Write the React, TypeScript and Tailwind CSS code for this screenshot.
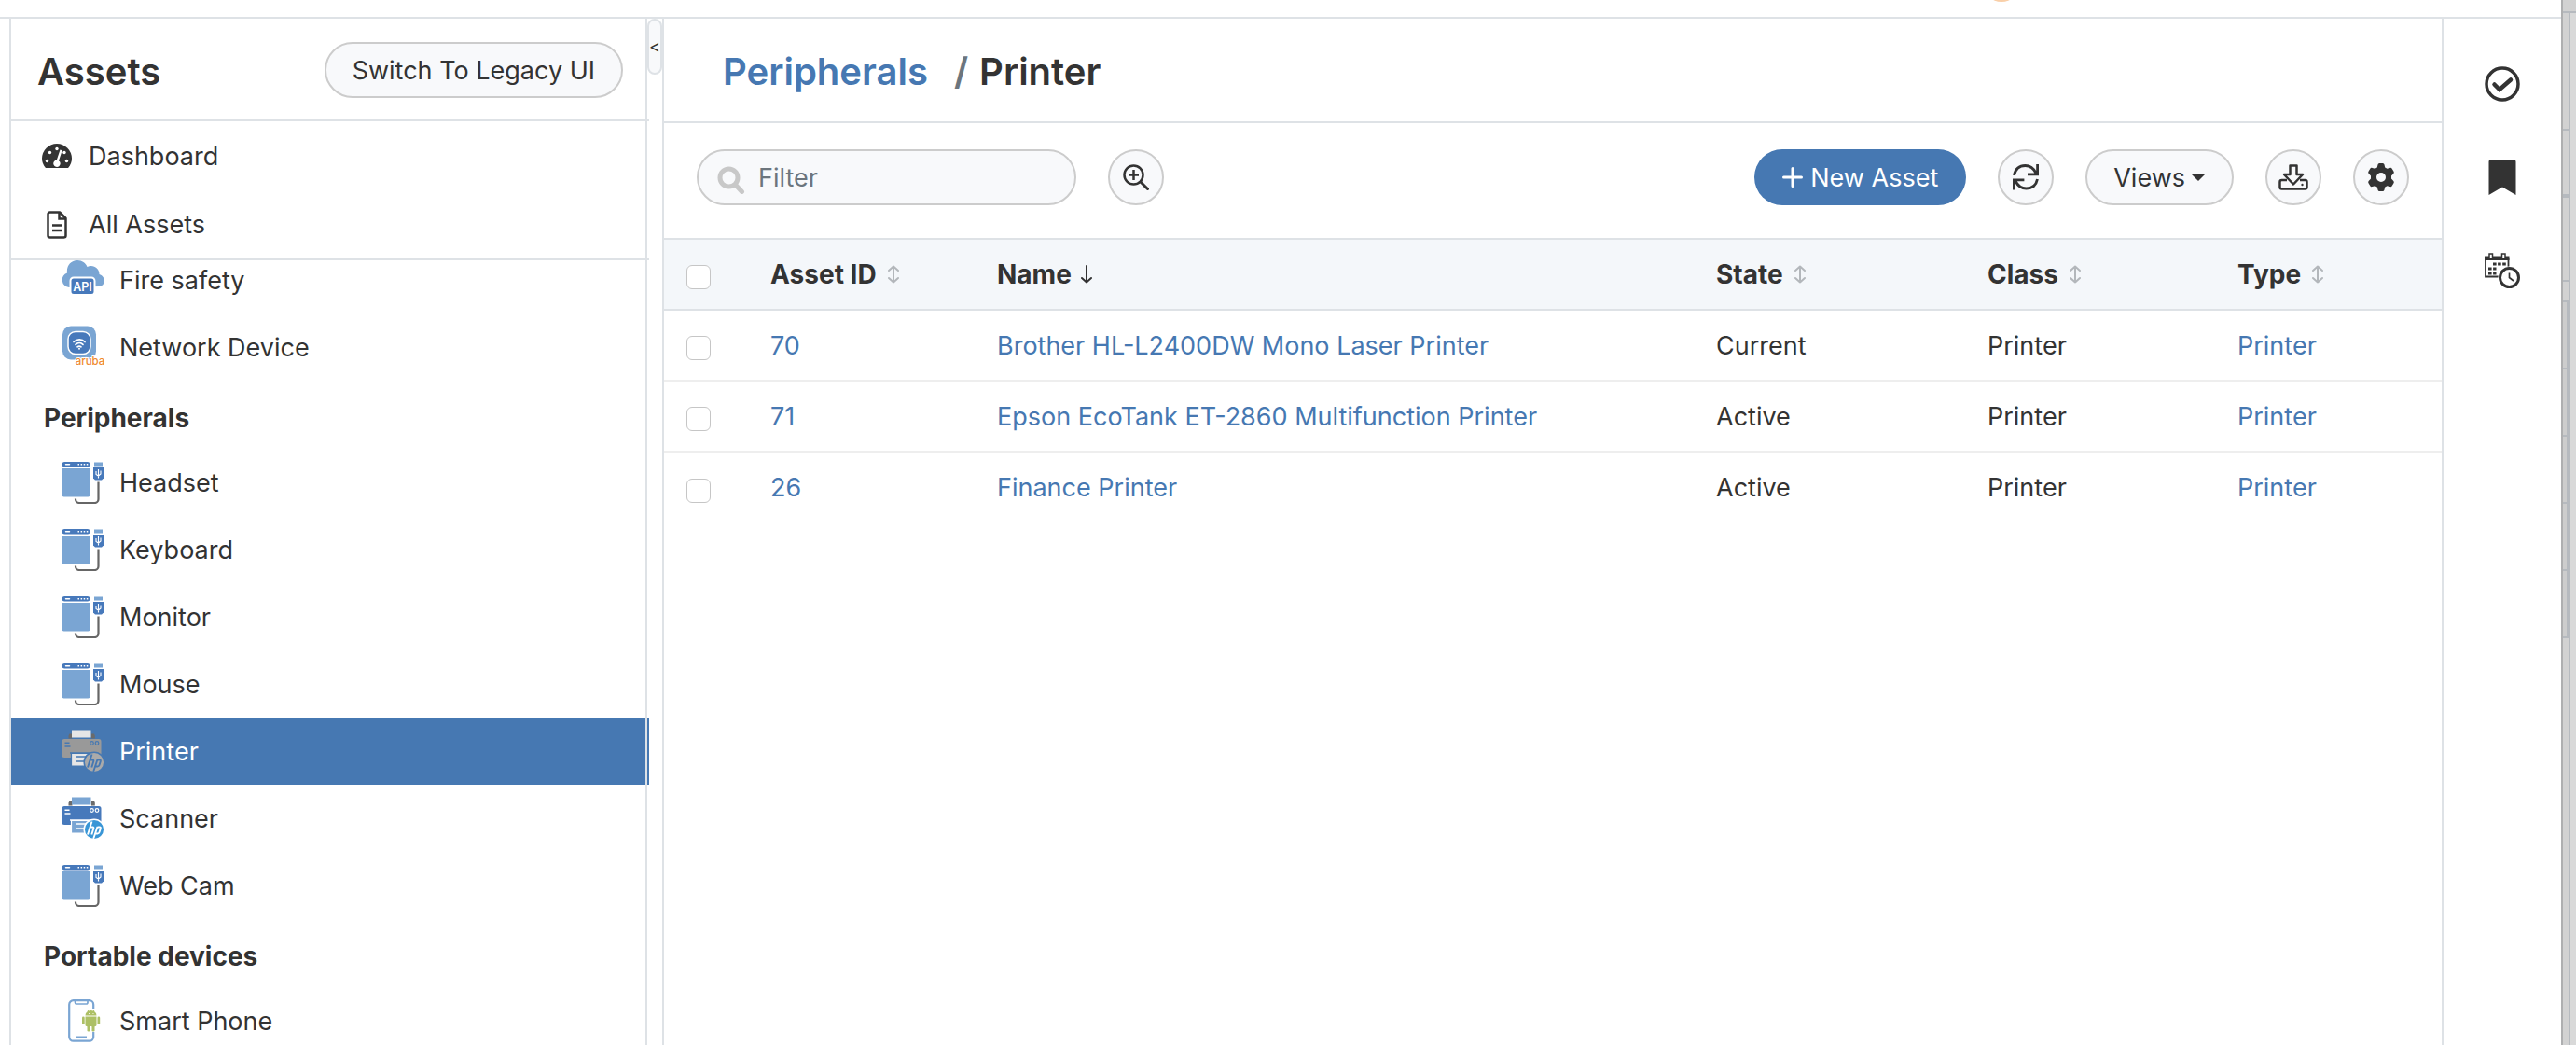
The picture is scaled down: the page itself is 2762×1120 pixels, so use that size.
import React from 'react';

const NODES = [
  { kind: 'item', label: 'Fire safety', icon: 'cloud' },
  { kind: 'item', label: 'Network Device', icon: 'wifi' },
  { kind: 'group', label: 'Peripherals' },
  { kind: 'item', label: 'Headset', icon: 'usb' },
  { kind: 'item', label: 'Keyboard', icon: 'usb' },
  { kind: 'item', label: 'Monitor', icon: 'usb' },
  { kind: 'item', label: 'Mouse', icon: 'usb' },
  { kind: 'item', label: 'Printer', icon: 'printer', active: true },
  { kind: 'item', label: 'Scanner', icon: 'printer' },
  { kind: 'item', label: 'Web Cam', icon: 'usb' },
  { kind: 'group', label: 'Portable devices' },
  { kind: 'item', label: 'Smart Phone', icon: 'phone' },
];

const ROWS = [
  { id: '70', name: 'Brother HL-L2400DW Mono Laser Printer', state: 'Current' },
  { id: '71', name: 'Epson EcoTank ET-2860 Multifunction Printer', state: 'Active' },
  { id: '26', name: 'Finance Printer', state: 'Active' },
];

function CloudIcon() {
  return (
    <svg viewBox="0 0 46 46" className="size-[46px]" aria-hidden="true">
      <path d="M8 31a8 8 0 0 1-2-15.500C5 8 10 2 17 2c5 0 9 3 10.500 7 6-3 13 1 13 8 3 1 5.500 4 5.500 7a6 6 0 0 1-6 6z" fill="#7aa5d3" />
      <rect x="9.500" y="20.500" width="26" height="18.500" rx="3.500" fill="#4779bb" stroke="#fff" strokeWidth="2" />
      <text x="22.500" y="34.500" textAnchor="middle" fontSize="12.500" fontWeight="600" fill="#fff" fontFamily="Inter, sans-serif">API</text>
    </svg>
  );
}

function WifiIcon() {
  return (
    <svg viewBox="0 0 46 46" className="size-[46px]" aria-hidden="true">
      <rect x="1" y="0.500" width="36" height="36" rx="9" fill="#7aa5d3" />
      <rect x="7" y="6.500" width="24" height="24" rx="8" fill="#4779bb" stroke="#fff" strokeWidth="1.500" />
      <g fill="none" stroke="#fff" strokeWidth="1.700" strokeLinecap="round">
        <path d="M13 17.500c3.500-3.500 9-3.500 12 0M15 20.300c2.500-2.300 5.800-2.300 8 0M17 22.800c1.300-1 2.700-1 4 0" />
      </g>
      <circle cx="19" cy="24.700" r="1" fill="#fff" />
      <text x="30.500" y="41.500" textAnchor="middle" fontSize="11.500" fontWeight="500" fill="#ef8a2e" stroke="#fff" strokeWidth="2" paintOrder="stroke" fontFamily="Inter, sans-serif">aruba</text>
    </svg>
  );
}

function UsbIcon() {
  return (
    <svg viewBox="0 0 46 46" className="size-[46px]" aria-hidden="true">
      <rect x="0.500" y="1" width="30" height="5.500" rx="2.700" fill="#4779bb" />
      <path d="M4.500 3.700h4" stroke="#fff" strokeWidth="1.500" strokeLinecap="round" />
      <path d="M17.500 3.700h11" stroke="#fff" strokeWidth="1.500" strokeDasharray="1.500 1.600" />
      <path d="M0.500 8h30v28.500a2 2 0 0 1-2 2h-26a2 2 0 0 1-2-2z" fill="#7aa5d3" />
      <rect x="35" y="1.500" width="9" height="4" fill="#7aa5d3" />
      <path d="M34 7h11v11.500l-2 2h-7l-2-2z" fill="#4779bb" />
      <path d="M39.500 9v9.500M37 11v3.500l2.500 1.500 2.500-2V10.500" fill="none" stroke="#fff" strokeWidth="1.100" />
      <path d="M39.500 22.500V41a4 4 0 0 1-4 4H19a4 4 0 0 1-4-4v-.5" fill="none" stroke="#666" strokeWidth="2.200" />
    </svg>
  );
}

function PrinterIcon({ gray = false }: { gray?: boolean }) {
  const body = gray ? '#999' : '#4779bb';
  const paper = gray ? '#e6e6e6' : '#7aa5d3';
  const gap = gray ? '#4678b2' : '#fff';
  return (
    <svg viewBox="0 0 46 46" className="size-[46px]" aria-hidden="true">
      <path d="M8.500 4.500h3v5h-4v-3zM32 4.500h3l.8 2v3H32z" fill="#6b6b6b" />
      <rect x="11" y="0.500" width="20.500" height="8" fill={paper} />
      <path d="M3 10h37a2.500 2.500 0 0 1 2.500 2.500V30H3a2.500 2.500 0 0 1-2.500-2.500v-15A2.500 2.500 0 0 1 3 10z" fill={body} />
      <path d="M3.500 14.300h5M3.500 18h6" stroke={gap} strokeWidth="1.500" />
      <circle cx="32.500" cy="14.500" r="1.800" fill="none" stroke={gap} strokeWidth="1.200" />
      <circle cx="38" cy="14.500" r="1.800" fill="none" stroke={gap} strokeWidth="1.200" />
      <path d="M9 25h26" stroke={gap} strokeWidth="1.500" />
      <path d="M10.500 25.500h22V39h-22z" fill={paper} stroke={gap} strokeWidth="1.200" />
      <path d="M15 29h11M15 34h9" stroke={gap} strokeWidth="1.600" />
      <circle cx="35" cy="35" r="10.800" fill={gray ? '#aaa' : '#3996d6'} stroke={gap} strokeWidth="1.500" />
      <g fill="none" stroke={gap} strokeWidth="1.900">
        <path d="M32.500 26.500 28 40.500M31 32.500h2.500q1.300 0 .8 1.500L32.300 40.500M38.500 32 34.200 45M38.500 32.500h2.300q1.400 0 1 1.500l-1.300 4q-.5 1.500-1.900 1.500h-2.400" />
      </g>
    </svg>
  );
}

function PhoneIcon() {
  return (
    <svg viewBox="0 0 46 46" className="size-[46px]" aria-hidden="true">
      <rect x="8.200" y="1.200" width="26" height="43.500" rx="4.500" fill="#fff" stroke="#7aa5d3" strokeWidth="2.200" />
      <path d="M14.500 1.500v2a1.500 1.500 0 0 0 1.500 1.500h10.500a1.500 1.500 0 0 0 1.500-1.500v-2" fill="none" stroke="#7aa5d3" strokeWidth="1.700" />
      <path d="M15 40.500h12" stroke="#7aa5d3" strokeWidth="2" />
      <path d="M31 10h6v25h-6z" fill="#fff" />
      <g fill="#adc065">
        <path d="M25.500 17.500a6 5.500 0 0 1 12 0zM25.500 18.500h12v9a1.500 1.500 0 0 1-1.500 1.500h-9a1.500 1.500 0 0 1-1.500-1.500z" />
        <rect x="22" y="18.500" width="2.700" height="8.500" rx="1.300" />
        <rect x="38.500" y="18.500" width="2.700" height="8.500" rx="1.300" />
        <rect x="27.500" y="28" width="3" height="6.500" rx="1.300" />
        <rect x="32.500" y="28" width="3" height="6.500" rx="1.300" />
      </g>
      <path d="m27.500 11 1.500 2.500M35.500 11 34 13.500" stroke="#adc065" />
      <path d="M29 15.500h.9M33.500 15.500h.9" stroke="#fff" />
    </svg>
  );
}

function NodeIcon({ name, gray }: { name?: string; gray?: boolean }) {
  if (name === 'cloud') return <CloudIcon />;
  if (name === 'wifi') return <WifiIcon />;
  if (name === 'printer') return <PrinterIcon gray={gray} />;
  if (name === 'phone') return <PhoneIcon />;
  return <UsbIcon />;
}

function GaugeIcon() {
  return (
    <svg viewBox="0 0 32 26" className="h-[26px] w-8" aria-hidden="true">
      <path d="M3.500 25.500C1.300 22.500 0 19.500 0 16a16 16 0 0 1 32 0c0 3.500-1.300 6.500-3.500 9.500-.4.500-1 .5-1.500.5H5c-.5 0-1.100 0-1.500-.5z" fill="#333" />
      <g fill="#fff">
        <circle cx="5.500" cy="18.500" r="1.700" /><circle cx="8.500" cy="9.500" r="1.700" /><circle cx="16" cy="5.500" r="1.700" /><circle cx="24" cy="9.500" r="1.700" /><circle cx="26.500" cy="18.500" r="1.700" />
        <path d="m19.500 6.500 2.200.7-3.700 11a3.700 3.700 0 1 1-2.200-.6z" />
      </g>
    </svg>
  );
}

function DocIcon() {
  return (
    <svg viewBox="0 0 22 30" className="h-[30px] w-8" fill="none" stroke="#333" strokeWidth="2.500" aria-hidden="true">
      <path d="M3.500 1.500H14l6.500 6.500v18.500a2 2 0 0 1-2 2h-15a2 2 0 0 1-2-2v-23a2 2 0 0 1 2-2z" strokeLinejoin="round" />
      <path d="M13.500 2v6.500H20M6 15.500h10M6 21h10" />
    </svg>
  );
}

function SortIcon() {
  return (
    <svg viewBox="0 0 12 20" className="h-5 w-3" fill="none" stroke="#b3b7bb" strokeWidth="2" strokeLinecap="round" strokeLinejoin="round" aria-hidden="true">
      <path d="M6 1.500v17M1 6l5-4.500L11 6M1 14l5 4.500 5-4.500" />
    </svg>
  );
}

function SortDownIcon() {
  return (
    <svg viewBox="0 0 12 20" className="h-5 w-3" fill="none" stroke="#333" strokeWidth="2" strokeLinecap="round" strokeLinejoin="round" aria-hidden="true">
      <path d="M6 1v17.500M1 14l5 4.500 5-4.500" />
    </svg>
  );
}

function RoundButton({ label, children }: { label: string; children: React.ReactNode }) {
  return (
    <button aria-label={label} className="flex size-[60px] shrink-0 items-center justify-center rounded-full border-2 border-[#ccc] bg-[#f8f9fb]">
      {children}
    </button>
  );
}

function Tick({ label }: { label: string }) {
  return (
    <input type="checkbox" aria-label={label} className="mt-1.5 block size-[26px] appearance-none rounded-md border border-[#c6c6c6] bg-white" />
  );
}

function Sidebar() {
  return (
    <aside className="relative flex w-[686px] shrink-0 flex-col border-l-2 border-[#dee2e6]">
      <header className="flex h-[110px] shrink-0 items-center justify-between border-b-2 border-[#dee2e6] px-7 pt-0.5">
        <h1 className="pt-1 text-[40px] leading-none font-semibold">Assets</h1>
        <button className="h-[60px] rounded-full border-2 border-[#ccc] bg-[#f8f9fb] px-7">Switch To Legacy UI</button>
      </header>
      <nav aria-label="Overview" className="shrink-0 border-b-2 border-[#dee2e6]">
        <a href="#dashboard" className="flex h-[74px] items-center gap-[18px] pl-[33px]"><GaugeIcon />Dashboard</a>
        <a href="#all" className="flex h-[73px] items-center gap-[18px] pl-[33px]"><DocIcon />All Assets</a>
      </nav>
      <nav aria-label="Asset types" className="min-h-0 flex-1 overflow-hidden">
        <div className="-mt-[15px]">
          {NODES.map((n) =>
            n.kind === 'group' ? (
              <h2 key={n.label} className="flex h-[73px] items-center pt-1.5 pl-[35px] text-[28px] font-bold">{n.label}</h2>
            ) : (
              <a
                key={n.label}
                href="#type"
                className={n.active ? 'flex h-[72px] items-center gap-4 bg-[#4678b2] pl-[54px] text-white' : 'flex h-[72px] items-center gap-4 pl-[54px]'}
              >
                <NodeIcon name={n.icon} gray={n.active} />
                {n.label}
              </a>
            ),
          )}
        </div>
      </nav>
      <div className="absolute inset-y-0 right-0.5 w-0.5 bg-[#dee2e6]" />
    </aside>
  );
}

function Toolbar() {
  return (
    <div className="flex items-center gap-[34px] px-[35px] pt-7 pb-[35px]">
      <label className="flex h-[60px] w-[407px] items-center gap-3.5 rounded-full border-2 border-[#ccc] bg-[#f8f9fb] px-5">
        <svg viewBox="0 0 30 30" className="mt-1.5 size-[30px] shrink-0" fill="none" stroke="#c8c8c8" aria-hidden="true">
          <circle cx="12.500" cy="12.500" r="9.500" strokeWidth="5" />
          <path d="m19.500 20 7 7.500" strokeWidth="5" strokeLinecap="round" />
        </svg>
        <input type="text" aria-label="Filter" placeholder="Filter" className="min-w-0 flex-1 bg-transparent outline-none placeholder:text-[#6c757d] placeholder:opacity-100" />
      </label>
      <RoundButton label="Advanced search">
        <svg viewBox="0 0 28 28" className="size-7" fill="none" stroke="#333" strokeWidth="2.500" aria-hidden="true">
          <circle cx="11.500" cy="11.500" r="10" />
          <path d="M11.500 6v11M6 11.500h11" />
          <path d="m19 19 7.500 7.500" strokeWidth="3" strokeLinecap="round" />
        </svg>
      </RoundButton>
      <div className="flex-1" />
      <button className="flex h-[60px] items-center gap-2 rounded-full bg-[#4678b2] px-[30px] text-white">
        <svg viewBox="0 0 22 22" className="size-[22px]" stroke="#fff" strokeWidth="3" strokeLinecap="round" aria-hidden="true"><path d="M11 1.500v19M1.500 11h19" /></svg>
        New Asset
      </button>
      <RoundButton label="Refresh">
        <svg viewBox="0 0 28 28" className="size-7" fill="none" stroke="#333" strokeWidth="2.800" aria-hidden="true">
          <path d="M1.500 12C3 4.500 8 1.500 13.500 1.500c5 0 8.500 2 11.500 8M26.600 0v10.800H16M26.500 16C25 23.500 20 26 14.500 26c-5 0-8.500-2-11.500-8M1.400 27.500V16.800h11" />
        </svg>
      </RoundButton>
      <button className="flex h-[60px] items-center gap-1.5 rounded-full border-2 border-[#ccc] bg-[#f8f9fb] px-7">
        Views
        <svg viewBox="0 0 16 8" className="h-2 w-4" aria-hidden="true"><path d="M0 0h16L8 8z" fill="#333" /></svg>
      </button>
      <RoundButton label="Export">
        <svg viewBox="0 0 32 28" className="h-7 w-8" fill="none" stroke="#333" strokeWidth="2.500" strokeLinejoin="round" aria-hidden="true">
          <path d="M9 17H3.500a2 2 0 0 0-2 2v5.500a2 2 0 0 0 2 2h25a2 2 0 0 0 2-2V19a2 2 0 0 0-2-2H23" />
          <path d="M12.500 1.500h7V11h6.500L16 21.500 6 11h6.500z" />
          <circle cx="25.500" cy="22" r="1.200" fill="#333" stroke="none" />
        </svg>
      </RoundButton>
      <RoundButton label="Settings">
        <svg viewBox="0 0 30 30" className="size-[30px]" aria-hidden="true">
          <path fillRule="evenodd" fill="#333" d="M11.500 1.500C12 .5 12.500 0 13.500 0h3c1 0 1.500.5 2 1.500l.7 3 2.300 1.300 3-.9c1-.3 1.700 0 2.200.9l1.800 3c.5.900.3 1.700-.4 2.400L26 13.500v3l2.100 2.300c.7.700.9 1.500.4 2.400l-1.800 3c-.5.900-1.200 1.200-2.200.9l-3-.9-2.300 1.300-.7 3c-.5 1-1 1.500-2 1.500h-3c-1 0-1.500-.5-2-1.500l-.7-3-2.300-1.300-3 .9c-1 .3-1.700 0-2.200-.9l-1.800-3c-.5-.9-.3-1.700.4-2.400L4 16.500v-3l-2.100-2.300c-.7-.7-.9-1.500-.4-2.400l1.800-3c.5-.9 1.200-1.200 2.200-.9l3 .9 2.300-1.300zM15 10a5 5 0 1 0 0 10 5 5 0 0 0 0-10z" />
        </svg>
      </RoundButton>
    </div>
  );
}

function AssetTable() {
  return (
    <table className="w-full table-fixed border-collapse text-left">
      <colgroup>
        <col className="w-[98px]" />
        <col className="w-[243px]" />
        <col />
        <col className="w-[291px]" />
        <col className="w-[268px]" />
        <col className="w-[235px]" />
      </colgroup>
      <thead>
        <tr className="h-[76px] border-y-2 border-[#dee2e6] bg-[#f4f7fa]">
          <th className="pl-6"><Tick label="Select all assets" /></th>
          {['Asset ID', 'Name', 'State', 'Class', 'Type'].map((h) => (
            <th key={h} className="pl-4 text-[28px] font-bold">
              <button className={h === 'Name' ? 'flex items-center gap-2.5' : 'flex items-center gap-3'}>
                {h}
                {h === 'Name' ? <SortDownIcon /> : <SortIcon />}
              </button>
            </th>
          ))}
        </tr>
      </thead>
      <tbody>
        {ROWS.map((r) => (
          <tr key={r.id} className="h-[76px] border-b-2 border-[#eee] last:border-b-0">
            <td className="pl-6"><Tick label={'Select asset ' + r.id} /></td>
            <td className="pl-4"><a href="#asset" className="text-[#4678b2]">{r.id}</a></td>
            <td className="pl-4"><a href="#asset" className="text-[#4678b2]">{r.name}</a></td>
            <td className="pl-4">{r.state}</td>
            <td className="pl-4">Printer</td>
            <td className="pl-4"><a href="#type" className="text-[#4678b2]">Printer</a></td>
          </tr>
        ))}
      </tbody>
    </table>
  );
}

function RightRail() {
  return (
    <aside className="flex w-32 shrink-0 flex-col items-center gap-[62px] border-l-2 border-[#dee2e6] pt-[51px]">
      <button aria-label="Approvals">
        <svg viewBox="0 0 38 38" className="size-[38px]" fill="none" stroke="#333" aria-hidden="true">
          <circle cx="19" cy="19" r="17" strokeWidth="3.500" />
          <path d="m10.500 19.500 5.500 5.500 12-10.500" strokeWidth="4.500" strokeLinecap="round" />
        </svg>
      </button>
      <button aria-label="Bookmarks">
        <svg viewBox="0 0 30 38" className="h-[38px] w-[30px]" aria-hidden="true"><path d="M3 0h24a2.500 2.500 0 0 1 2.500 2.500V38L15 29.500.5 38V2.500A2.500 2.500 0 0 1 3 0z" fill="#333" /></svg>
      </button>
      <button aria-label="Reminders">
        <svg viewBox="0 0 38 38" className="size-[38px]" fill="none" stroke="#333" aria-hidden="true">
          <path d="M1 6h24.500v19.500H1z" fill="#fff" strokeWidth="1.800" />
          <path d="M0 3.500h26.500V8H0z" fill="#333" stroke="none" />
          <path d="M5 1h3.500v5H5zM18.500 1H22v5h-3.500z" fill="#fff" strokeWidth="1.500" />
          <path d="M9 12h14.500M4 17h8.500M4 22h8.500" strokeWidth="3.200" strokeDasharray="3.600 1.500" />
          <circle cx="26.500" cy="26.500" r="12" fill="#fff" stroke="none" />
          <circle cx="26.500" cy="26.500" r="10" fill="#fff" strokeWidth="3" />
          <path d="M26.500 21.500v5l4.500 3.500" strokeWidth="1.700" />
        </svg>
      </button>
    </aside>
  );
}

/* Sliver of the dimmed window that sits behind this one. */
function BackdropEdge() {
  return (
    <div className="flex w-4 shrink-0 flex-col border-l-2 border-[#aeafb0] bg-[#d2d2d2]">
      <div className="h-3.5 shrink-0 border-b-2 border-[#b6babf]" />
      <div className="flex min-h-0 flex-1">
        <div className="w-1.5">
          <div className="h-[126px] border-b-2 border-[#b6babf]" />
          <div className="h-[72px] border-b-4 border-[#b6babf]" />
          <div className="h-[90px] border-b-2 border-[#b6babf]" />
          <div className="h-5" />
          <div className="border-t-2 border-r-2 border-[#b6babf] bg-[#cdcdcd]">
            {[1, 2, 3, 4, 5].map((n) => (
              <div key={n} className="h-[72px] border-b-2 border-[#b6babf]" />
            ))}
          </div>
        </div>
        <div className="flex-1 border-l-2 border-[#b6babf] bg-[#d9d9d9]" />
      </div>
    </div>
  );
}

export default function App() {
  return (
    <div className="flex h-screen overflow-hidden bg-white font-['Inter',sans-serif] text-[27px] leading-none text-[#333]">
      <div className="flex min-w-0 flex-1 flex-col">
        <div className="flex h-5 shrink-0 justify-end overflow-hidden border-b-2 border-[#dee2e6] pr-[580px]">
          <span className="-mt-[38px] size-10 rounded-full bg-[#f9cfa8]" />
        </div>
        <div className="flex min-h-0 flex-1 pl-2.5">
          <Sidebar />
          <div className="w-3.5 shrink-0">
            <button aria-label="Collapse sidebar" className="-ml-0.5 flex h-[60px] w-4 items-center justify-center rounded-lg border-2 border-[#dee2e6] bg-[#f8f9fb] text-lg leading-none">&lt;</button>
          </div>
          <main className="min-w-0 flex-1 border-l-2 border-[#dee2e6]">
            <nav aria-label="Breadcrumb" className="flex h-28 items-center border-b-2 border-[#dee2e6] pt-1 pl-[63px] text-[40px] leading-none font-semibold">
              <a href="#peripherals" className="text-[#4678b2]">Peripherals</a>
              <span className="mr-3 ml-7 text-[#6c757d]">/</span>
              <span>Printer</span>
            </nav>
            <Toolbar />
            <AssetTable />
          </main>
          <RightRail />
        </div>
      </div>
      <BackdropEdge />
    </div>
  );
}
